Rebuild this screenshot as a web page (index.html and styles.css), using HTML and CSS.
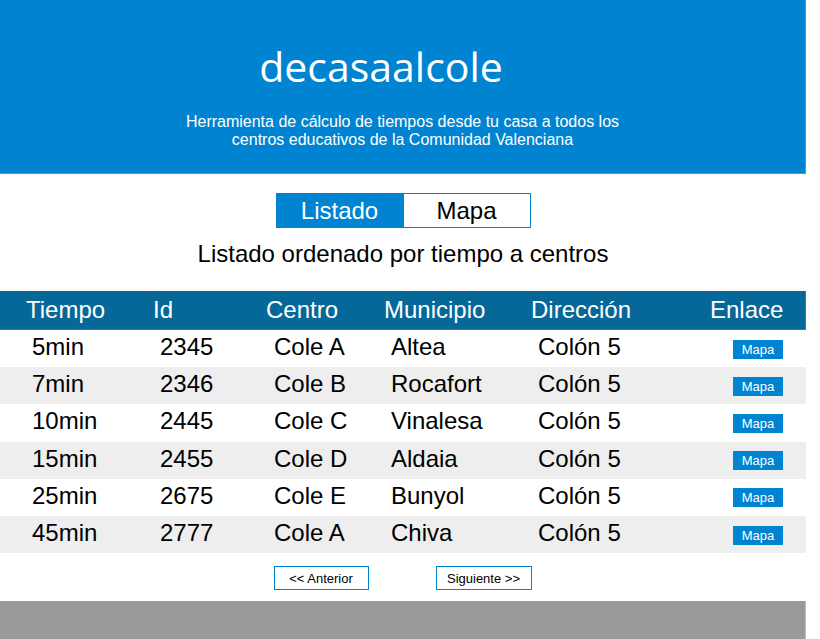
FILE: index.html
```html
<!DOCTYPE html>
<html lang="es">
<head>
<meta charset="utf-8">
<title>decasaalcole</title>
<link rel="stylesheet" href="styles.css">
</head>
<body>
<div class="page">
  <header class="hero">
    <h1 class="brand">decasaalcole</h1>
    <p class="tagline">Herramienta de cálculo de tiempos desde tu casa a todos los<br>centros educativos de la Comunidad Valenciana</p>
  </header>

  <nav class="tabs">
    <span class="tab active">Listado</span>
    <span class="tab">Mapa</span>
  </nav>

  <h2 class="section-title">Listado ordenado por tiempo a centros</h2>

  <div class="table">
    <div class="row head">
      <span>Tiempo</span><span>Id</span><span>Centro</span><span>Municipio</span><span>Dirección</span><span>Enlace</span>
    </div>
    <div class="row">
      <span>5min</span><span>2345</span><span>Cole A</span><span>Altea</span><span>Colón 5</span><span><a class="map-btn">Mapa</a></span>
    </div>
    <div class="row alt">
      <span>7min</span><span>2346</span><span>Cole B</span><span>Rocafort</span><span>Colón 5</span><span><a class="map-btn">Mapa</a></span>
    </div>
    <div class="row">
      <span>10min</span><span>2445</span><span>Cole C</span><span>Vinalesa</span><span>Colón 5</span><span><a class="map-btn">Mapa</a></span>
    </div>
    <div class="row alt">
      <span>15min</span><span>2455</span><span>Cole D</span><span>Aldaia</span><span>Colón 5</span><span><a class="map-btn">Mapa</a></span>
    </div>
    <div class="row">
      <span>25min</span><span>2675</span><span>Cole E</span><span>Bunyol</span><span>Colón 5</span><span><a class="map-btn">Mapa</a></span>
    </div>
    <div class="row alt">
      <span>45min</span><span>2777</span><span>Cole A</span><span>Chiva</span><span>Colón 5</span><span><a class="map-btn">Mapa</a></span>
    </div>
  </div>

  <div class="pager">
    <a class="pager-btn">&lt;&lt; Anterior</a>
    <a class="pager-btn">Siguiente &gt;&gt;</a>
  </div>

  <footer class="footer"></footer>
</div>
</body>
</html>
```

FILE: styles.css
```css
html, body {
  margin: 0;
  padding: 0;
  background: #ffffff;
}

body {
  font-family: "Liberation Sans", Arial, sans-serif;
  color: #000;
}

.page {
  width: 806px;
}

.hero {
  background: #0084d1;
  height: 174px;
  border-right: 1px solid #3b9fdc;
  border-bottom: 1px solid #3b9fdc;
  box-sizing: border-box;
  display: flex;
  flex-direction: column;
  align-items: center;
  color: #fff;
  padding-top: 38px;
}

.brand {
  font-family: "Open Sans", sans-serif;
  font-weight: 400;
  font-size: 41px;
  line-height: 56px;
  margin: 0 43px 0 0;
}

.tagline {
  font-size: 16px;
  line-height: 18px;
  text-align: center;
  margin: 19px 0 0 0;
}

.tabs {
  display: flex;
  justify-content: center;
  margin-top: 19px;
}

.tab {
  box-sizing: border-box;
  width: 128px;
  height: 35px;
  display: flex;
  align-items: center;
  justify-content: center;
  font-size: 24px;
  border: 1px solid #0084d1;
}

.tab.active {
  background: #0084d1;
  color: #fff;
}

.tab + .tab {
  width: 127px;
  border-left: 0;
}

.section-title {
  font-weight: 400;
  font-size: 24px;
  line-height: 28px;
  text-align: center;
  margin: 12px 0 0 0;
}

.table {
  margin-top: 23px;
}

.row {
  display: grid;
  grid-template-columns: 128px 113px 118px 147px 178px 122px;
  align-items: center;
  height: 37.2px;
  font-size: 24px;
}

.row > span {
  padding-left: 32px;
  padding-bottom: 3px;
}

.row > span:nth-child(3) {
  padding-left: 33px;
}

.row.head {
  height: 39px;
  background: #066799;
  color: #fff;
  border-bottom: 1px solid #2c7fae;
  border-right: 1px solid #2c7fae;
  box-sizing: border-box;
}

.row.head > span {
  padding-left: 25px;
  padding-bottom: 1px;
}

.row.head > span:first-child {
  padding-left: 26px;
}

.row.alt {
  background: #eeeeee;
}

.row > span:last-child {
  padding-left: 49px;
  padding-bottom: 0;
  display: flex;
}

.row.head > span:last-child {
  padding-left: 26px;
  padding-bottom: 1px;
}

.map-btn {
  display: inline-block;
  background: #0084d1;
  color: #fff;
  font-size: 13px;
  line-height: 19px;
  width: 50px;
  text-align: center;
  margin-top: 1px;
}

.pager {
  display: flex;
  justify-content: center;
  gap: 67px;
  margin-top: 13px;
  margin-right: 1px;
}

.pager-btn {
  box-sizing: border-box;
  height: 24px;
  border: 1px solid #0084d1;
  font-size: 13px;
  display: flex;
  align-items: center;
  justify-content: center;
}

.pager-btn:first-child {
  width: 95px;
}

.pager-btn:last-child {
  width: 96px;
}

.footer {
  margin-top: 11px;
  height: 38px;
  background: #9a9a9a;
  border-right: 1px solid #bdbdbd;
}
```
